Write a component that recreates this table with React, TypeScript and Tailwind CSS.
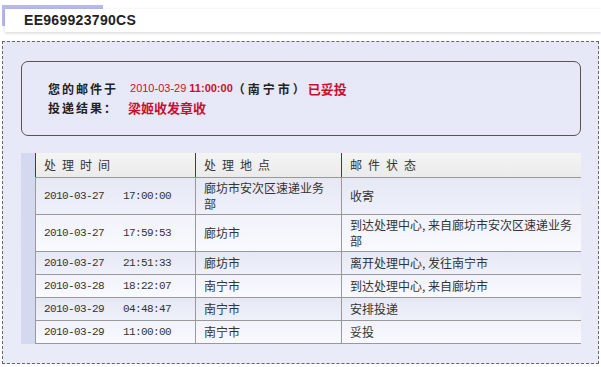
const rows = [
  { date: '2010-03-27', time: '17:00:00', place: ['廊坊市安次区速递业务', '部'], status: ['收寄'], tall: true },
  { date: '2010-03-27', time: '17:59:53', place: ['廊坊市'], status: ['到达处理中心, 来自廊坊市安次区速递业务', '部'], tall: true },
  { date: '2010-03-27', time: '21:51:33', place: ['廊坊市'], status: ['离开处理中心, 发往南宁市'] },
  { date: '2010-03-28', time: '18:22:07', place: ['南宁市'], status: ['到达处理中心, 来自廊坊市'] },
  { date: '2010-03-29', time: '04:48:47', place: ['南宁市'], status: ['安排投递'] },
  { date: '2010-03-29', time: '11:00:00', place: ['南宁市'], status: ['妥投'] },
]

const cjk = "font-['Noto_Sans_CJK_SC',sans-serif]"

function Lines({ lines }: { lines: string[] }) {
  return (
    <div className="leading-[16px]">
      {lines.map((l, i) => (
        <div key={i}>{l}</div>
      ))}
    </div>
  )
}

export default function App() {
  return (
    <div className={`w-[601px] h-[367px] bg-white overflow-hidden ${cjk}`}>
      {/* Mail number header */}
      <div className="pt-[5px]">
        <div className="ml-[2px] w-[101px] h-[4px] bg-[#b6bae7]" />
        <div className="flex">
          <div className="ml-[2px] w-[3px] h-[17px] bg-[#b6bae7]" />
          <div className="flex-1 h-[23px] bg-white shadow-[0_1px_3px_rgba(0,0,0,0.18)] flex items-center pl-[19px]">
            <span className="font-['Liberation_Sans',sans-serif] font-bold text-[14px] tracking-[0.3px] text-[#222]">
              EE969923790CS
            </span>
          </div>
        </div>
      </div>

      {/* Result panel */}
      <div className="mt-[9px] ml-[2px] w-[597px] h-[323px] border border-dashed border-[#666] bg-gradient-to-b from-[#e6e8f7] to-[#e9ebf8] pt-[19px] pl-[18px]">
        <div className="w-[560px] h-[75px] border border-[#555] rounded-[7px] pl-[26px] pt-[17px] text-[12px] font-bold text-[#222]">
          <div className="flex items-center h-[19px]">
            <span className="tracking-[2px]">您的邮件于</span>
            <span className="ml-[12px] font-['Liberation_Sans',sans-serif] text-[11px] text-[#c8102e] font-normal">
              2010-03-29 <b>11:00:00</b>
            </span>
            <span className="tracking-[3px]">（南宁市）</span>
            <span className="text-[#c8102e] text-[13px]">已妥投</span>
          </div>
          <div className="flex items-center h-[19px]">
            <span className="tracking-[2px]">投递结果：</span>
            <span className="ml-[10px] text-[#c8102e] text-[13px]">梁姬收发章收</span>
          </div>
        </div>

        {/* Trace table */}
        <div className="mt-[17px] flex w-[560px] bg-[#d5d9f0] pl-[14px] text-[12px] text-[#333]">
          <div className="flex-1">
            <div className="flex h-[25px] border-b border-[#999] bg-gradient-to-b from-[#f4f4f4] to-[#ebebeb]">
              <div className="w-[160px] border-l border-[#c00] pl-[8px] flex items-center tracking-[6px]">处理时间</div>
              <div className="w-[146px] border-l border-[#c00] pl-[8px] flex items-center tracking-[6px]">处理地点</div>
              <div className="flex-1 border-l border-[#c00] pl-[8px] flex items-center tracking-[6px]">邮件状态</div>
            </div>
            {rows.map((r, i) => (
              <div
                key={i}
                className={`flex border-b border-[#999] ${r.tall ? 'h-[37px]' : 'h-[23px]'} ${
                  i % 2 === 0
                    ? 'bg-gradient-to-b from-[#e6e8f5] to-[#eef0fa]'
                    : 'bg-gradient-to-b from-[#f2f3fb] to-[#f9faff]'
                }`}
              >
                <div className="w-[160px] border-l border-[#999] pl-[8px] flex items-center font-['Liberation_Mono',monospace] text-[11px] tracking-[-0.6px]">
                  <span>{r.date}</span>
                  <span className="ml-[19px]">{r.time}</span>
                </div>
                <div className="w-[146px] border-l border-[#999] pl-[8px] flex items-center">
                  <Lines lines={r.place} />
                </div>
                <div className="flex-1 border-l border-[#999] pl-[8px] flex items-center">
                  <Lines lines={r.status} />
                </div>
              </div>
            ))}
          </div>
        </div>
      </div>
    </div>
  )
}
